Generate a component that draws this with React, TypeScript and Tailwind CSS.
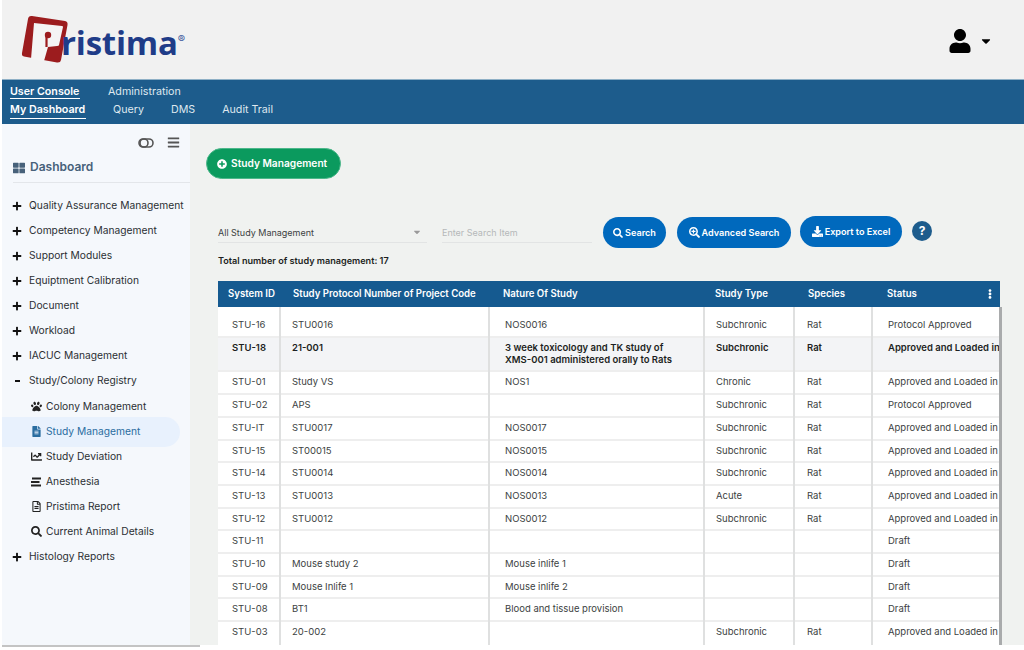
import React from "react";
import { FaUser, FaPaw, FaFileAlt, FaChartLine, FaBars, FaRegFileAlt, FaSearch, FaPlusCircle, FaSearchPlus, FaDownload, FaEllipsisV, FaThLarge, FaPlus, FaCaretDown } from "react-icons/fa";

const menuTop = ["Quality Assurance Management", "Competency Management", "Support Modules", "Equiptment Calibration", "Document", "Workload", "IACUC Management"];

const Bars3 = () => (
  <svg width="11" height="10" viewBox="0 0 11 10" fill="currentColor">
    <rect x="1" y="0.500" width="9" height="2" />
    <rect x="0" y="4" width="8.500" height="2" />
    <rect x="0" y="7.500" width="10" height="2" />
  </svg>
);

const subMenu: { label: string; icon: React.ReactNode; active?: boolean }[] = [
  { label: "Colony Management", icon: <FaPaw /> },
  { label: "Study Management", icon: <FaFileAlt />, active: true },
  { label: "Study Deviation", icon: <FaChartLine /> },
  { label: "Anesthesia", icon: <Bars3 /> },
  { label: "Pristima Report", icon: <FaRegFileAlt /> },
  { label: "Current Animal Details", icon: <FaSearch /> },
];

type Row = { c: string[]; h: string; shade?: boolean };
const AP = "Approved and Loaded in Pristima";
const rows: Row[] = [
  { c: ["STU-16", "STU0016", "NOS0016", "Subchronic", "Rat", "Protocol Approved"], h: "h-[30px]" },
  { c: ["STU-18", "21-001", "3 week toxicology and TK study of XMS-001 administered orally to Rats", "Subchronic", "Rat", AP], h: "h-[34px]", shade: true },
  { c: ["STU-01", "Study VS", "NOS1", "Chronic", "Rat", AP], h: "h-[23px]" },
  { c: ["STU-02", "APS", "", "Subchronic", "Rat", "Protocol Approved"], h: "h-[23px]" },
  { c: ["STU-IT", "STU0017", "NOS0017", "Subchronic", "Rat", AP], h: "h-[23px]" },
  { c: ["STU-15", "ST00015", "NOS0015", "Subchronic", "Rat", AP], h: "h-[22px]" },
  { c: ["STU-14", "STU0014", "NOS0014", "Subchronic", "Rat", AP], h: "h-[23px]" },
  { c: ["STU-13", "STU0013", "NOS0013", "Acute", "Rat", AP], h: "h-[23px]" },
  { c: ["STU-12", "STU0012", "NOS0012", "Subchronic", "Rat", AP], h: "h-[22px]" },
  { c: ["STU-11", "", "", "", "", "Draft"], h: "h-[23px]" },
  { c: ["STU-10", "Mouse study 2", "Mouse inlife 1", "", "", "Draft"], h: "h-[23px]" },
  { c: ["STU-09", "Mouse Inlife 1", "Mouse inlife 2", "", "", "Draft"], h: "h-[22px]" },
  { c: ["STU-08", "BT1", "Blood and tissue provision", "", "", "Draft"], h: "h-[23px]" },
  { c: ["STU-03", "20-002", "", "Subchronic", "Rat", AP], h: "h-[26px]" },
];

const cols = [
  { w: "w-[62px]", head: "pl-[10px]", body: "pl-[14px]", label: "System ID" },
  { w: "w-[209px]", head: "pl-[13px]", body: "pl-[11px]", label: "Study Protocol Number of Project Code" },
  { w: "w-[215px]", head: "pl-[14px]", body: "pl-[15px]", label: "Nature Of Study" },
  { w: "w-[90px]", head: "pl-[11px]", body: "pl-[11px]", label: "Study Type" },
  { w: "w-[78px]", head: "pl-[14px]", body: "pl-[12px]", label: "Species" },
  { w: "w-[128px]", head: "pl-[15px]", body: "pl-[15px]", label: "Status" },
];

function Logo() {
  return (
    <div className="flex items-end">
      <svg width="47" height="50" viewBox="0 0 47 50" className="shrink-0">
        <path d="M11 1 L44 6 Q47 6.500 46.500 10 L40 45 Q39.500 48 36 47.500 L3 41.500 Q.5 41 1 38 L7 4 Q7.500 .5 11 1Z" fill="#9c1c1e" />
        <path d="M13 8 L41 11 Q42 11 42 12 L38 30 Q38 31 36 31 L27 32 L23 46 L10 44Z" fill="#f4f4f4" />
        <circle cx="27" cy="20" r="3.200" fill="#9c1c1e" />
        <path d="M25.500 20 L25.500 32" stroke="#9c1c1e" strokeWidth="2.200" fill="none" />
      </svg>
      <span className="ml-[-7px] mb-[4px] text-[33px] leading-[36px] font-bold text-[#1f3c88] tracking-[-0.2px] font-['Open_Sans',sans-serif]">ristima</span>
      <span className="mb-[21px] text-[11px] leading-[10px] text-[#3d5a9e]">®</span>
    </div>
  );
}

export default function App() {
  return (
    <div className="w-[1024px] h-[650px] overflow-hidden bg-white pl-[2px] font-['Inter',sans-serif] flex flex-col">
      <header className="h-[79px] shrink-0 bg-[#f1f1f1] flex items-center justify-between pl-[19px] pr-[31px]">
        <Logo />
        <div className="flex items-center gap-[7px] pt-[3px]">
          <FaUser className="text-[24px] text-black" />
          <FaCaretDown className="text-[14px] text-black" />
        </div>
      </header>
      <nav className="h-[45px] shrink-0 bg-[#1d5c8c] border-t border-[#8fb0c6] text-[10.700px] text-[#dfe8ef] pl-[8px] pt-[3px] leading-[18px]">
        <div className="flex">
          <span className="font-semibold text-white border-b border-white leading-[13px] mt-[2px] mb-[2px] w-[70px] whitespace-nowrap">User Console</span>
          <span className="ml-[28px]">Administration</span>
        </div>
        <div className="flex">
          <span className="font-semibold text-white border-b border-white leading-[13px] mt-[2px] w-[76px] whitespace-nowrap">My Dashboard</span>
          <span className="ml-[27px]">Query</span>
          <span className="ml-[27px]">DMS</span>
          <span className="ml-[27px]">Audit Trail</span>
        </div>
      </nav>
      <div className="h-[521px] w-[1022px] flex shrink-0 bg-[#f0f2f0] overflow-hidden">
        <aside className="w-[188px] shrink-0 bg-[#f5f8fc] flex flex-col">
          <div className="flex justify-end items-center gap-[13px] pr-[10px] pt-[11px] h-[26px] text-[#555]">
            <svg width="16" height="10" viewBox="0 0 16 10" fill="none" stroke="#555" strokeWidth="1.600"><rect x="1" y="1" width="14" height="8" rx="4" /><circle cx="6" cy="5" r="4" /></svg>
            <FaBars className="text-[13px]" />
          </div>
          <div className="ml-[11px] mt-[9px] h-[24px] border-b border-[#e3e6ea] flex items-start gap-[5px] text-[12px] leading-[16px] font-semibold text-[#47617a]">
            <FaThLarge className="text-[12px] mt-[3px]" />
            <span>Dashboard</span>
          </div>
          <div className="mt-[10px] text-[10.250px] text-[#2b2f33]">
            {menuTop.map((m) => (
              <div key={m} className="h-[25px] flex items-center pl-[10px]">
                <FaPlus className="text-[10px] text-[#111] w-[10px] mr-[7px] shrink-0" />
                <span className="whitespace-nowrap">{m}</span>
              </div>
            ))}
            <div className="h-[26px] flex items-center pl-[13px]">
              <span className="w-[5px] h-[2px] bg-[#111] mr-[9px]" />
              <span>Study/Colony Registry</span>
            </div>
            {subMenu.map((s) => (
              <div key={s.label} className={`flex items-center pl-[29px] w-[178px] rounded-r-full ${s.active ? "bg-[#e8f1fd] text-[#2a6da0] h-[30px] -my-[2.500px]" : "h-[25px]"}`}>
                <span className={`text-[11px] w-[15px] shrink-0 ${s.active ? "text-[#2a6da0]" : "text-[#222]"}`}>{s.icon}</span>
                <span className="whitespace-nowrap">{s.label}</span>
              </div>
            ))}
            <div className="h-[25px] flex items-center pl-[10px]">
              <FaPlus className="text-[10px] text-[#111] w-[10px] mr-[7px] shrink-0" />
              <span>Histology Reports</span>
            </div>
          </div>
        </aside>
        <main className="flex-1 min-w-0 pt-[24px] flex flex-col">
          <div className="pl-[16px] shrink-0">
            <button className="h-[31px] w-[135px] rounded-full bg-[#0b9a5e] text-white text-[10.200px] font-semibold flex items-center pl-[10px] gap-[4px] border border-[#4cb78a]">
              <FaPlusCircle className="text-[10px]" />
              Study Management
            </button>
          </div>
          <div className="pl-[28px] mt-[38px] flex items-start h-[32px] shrink-0">
            <div className="w-[209px] h-[27px] mt-[-1px] border-b border-[#e2e4e4] flex items-center justify-between text-[9px] text-[#3c3f42] pt-[8px]">
              <span>All Study Management</span>
              <FaCaretDown className="text-[10px] text-[#9a9a9a] mr-[5px] mb-[3px]" />
            </div>
            <div className="ml-[15px] w-[150px] h-[27px] mt-[-1px] border-b border-[#e2e4e4] flex items-center text-[9px] text-[#b5b8b9] pt-[8px]">Enter Search Item</div>
            <button className="ml-[11px] w-[63px] h-[31px] rounded-full bg-[#0069bd] text-white text-[9.100px] font-semibold flex items-center justify-center gap-[2px]"><FaSearch className="text-[10px]" />Search</button>
            <button className="ml-[11px] w-[114px] h-[31px] rounded-full bg-[#0069bd] text-white text-[9.100px] font-semibold flex items-center justify-center gap-[2px]"><FaSearchPlus className="text-[11px]" />Advanced Search</button>
            <button className="ml-[9px] mt-[-1px] w-[102px] h-[31px] rounded-full bg-[#0069bd] text-white text-[9.100px] font-semibold flex items-center justify-center gap-[2px]"><FaDownload className="text-[11px]" />Export to Excel</button>
            <span className="ml-[10px] mt-[4px] w-[20px] h-[20px] rounded-full bg-[#1d5c8c] text-white text-[12px] font-bold flex items-center justify-center">?</span>
          </div>
          <div className="pl-[28px] mt-[4px] h-[20px] shrink-0 text-[9.100px] leading-[16px] font-semibold text-[#1c1f22]">Total number of study management: 17</div>
          <div className="ml-[28px] mt-[8px] w-[782px] relative shrink-0">
            <table className="table-fixed border-collapse w-[782px] text-[9.500px] text-[#3c3f42]">
              <thead>
                <tr className="h-[26px] bg-[#155a90] text-white text-[9.650px]">
                  {cols.map((c, i) => (
                    <th key={c.label} className={`${c.w} ${c.head} text-left font-semibold whitespace-nowrap p-0 relative`}>
                      {c.label}
                      {i === 5 && <FaEllipsisV className="absolute right-[5px] top-[8px] text-[10px]" />}
                    </th>
                  ))}
                </tr>
              </thead>
              <tbody>
                {rows.map((r) => (
                  <tr key={r.c[0]} className={`${r.h} border-b-2 border-[#eeeeee] last:border-b-0 ${r.shade ? "bg-[#f3f4f6] font-semibold text-[#1c1f22]" : "bg-white"}`}>
                    {r.c.map((t, i) => (
                      <td key={i} className={`${cols[i].body} p-0 ${i < 5 ? "border-r-2 border-[#dfe0e0]" : ""} ${r.shade ? `align-top pt-[4px] leading-[12px] ${i === 2 ? "pr-[20px]" : ""}` : r.c[0] === "STU-16" ? "align-bottom pb-[4px]" : r.c[0] === "STU-03" ? "align-top pt-[3px]" : ""} ${i === 5 ? "whitespace-nowrap overflow-hidden" : ""} ${i === 0 ? "whitespace-nowrap" : ""}`}>{t}</td>
                    ))}
                  </tr>
                ))}
              </tbody>
            </table>
            <div className="absolute right-[-2px] top-[26px] bottom-0 w-[3px] bg-[#a9abac]" />
          </div>
        </main>
      </div>
      <div className="h-[2px] w-[198px] shrink-0 bg-[#c4c4c4]" />
    </div>
  );
}
